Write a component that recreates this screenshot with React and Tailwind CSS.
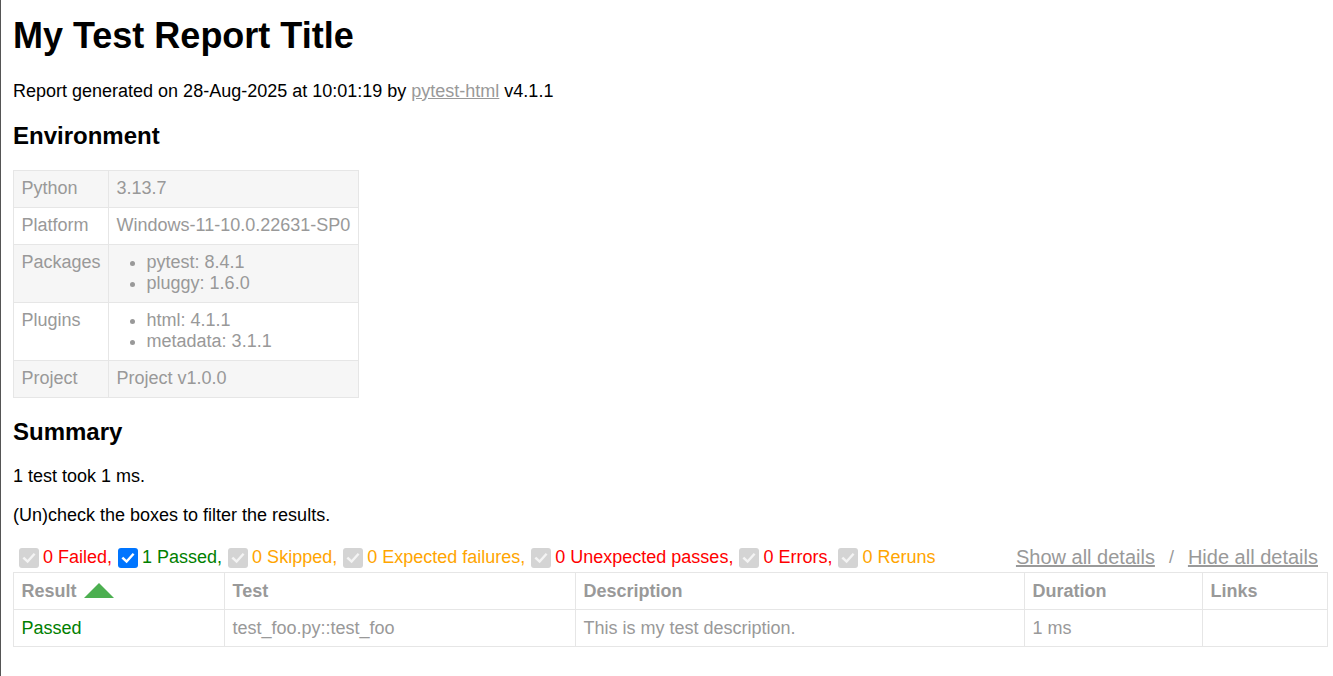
import React from "react";

const env = [
  { key: "Python", value: "3.13.7" },
  { key: "Platform", value: "Windows-11-10.0.22631-SP0" },
  { key: "Packages", list: ["pytest: 8.4.1", "pluggy: 1.6.0"] },
  { key: "Plugins", list: ["html: 4.1.1", "metadata: 3.1.1"] },
  { key: "Project", value: "Project v1.0.0" },
];

const filters = [
  { label: "0 Failed,", color: "text-[#ff0000]", checked: false },
  { label: "1 Passed,", color: "text-[#008000]", checked: true },
  { label: "0 Skipped,", color: "text-[#ffa500]", checked: false },
  { label: "0 Expected failures,", color: "text-[#ffa500]", checked: false },
  { label: "0 Unexpected passes,", color: "text-[#ff0000]", checked: false },
  { label: "0 Errors,", color: "text-[#ff0000]", checked: false },
  { label: "0 Reruns", color: "text-[#ffa500]", checked: false },
];

function CheckBox({ active }) {
  return (
    <span
      className={`ml-[6px] mr-[4.5px] my-[4.5px] flex h-[19.5px] w-[19.5px] shrink-0 items-center justify-center rounded-[3px] ${
        active ? "bg-[#0075ff]" : "bg-[#d4d4d4]"
      }`}
    >
      <svg width="14" height="14" viewBox="0 0 14 14" fill="none">
        <path
          d="M2.2 7.4 L5.6 10.6 L11.8 3.6"
          stroke={active ? "#ffffff" : "#f4f4f4"}
          strokeWidth="2.4"
          strokeLinecap="square"
        />
      </svg>
    </span>
  );
}

export default function App() {
  return (
    <div className="min-h-screen border-l border-[#555] bg-white pl-[12px] pr-[6px] pt-[15px] font-['Liberation_Sans',Arial,Helvetica,sans-serif] text-[18px] leading-[normal] text-[#999]">
      <h1 className="mb-[24px] text-[36px] font-bold leading-[normal] text-black">
        My Test Report Title
      </h1>
      <p className="mb-[18px] text-black">
        Report generated on 28-Aug-2025 at 10:01:19 by{" "}
        <a href="#" className="text-[#999] underline">
          pytest-html
        </a>{" "}
        v4.1.1
      </p>

      <h2 className="my-[19.92px] text-[24px] font-bold leading-[normal] text-black">
        Environment
      </h2>
      <table className="border-collapse">
        <tbody>
          {env.map((row, i) => (
            <tr key={row.key} className={i % 2 === 0 ? "bg-[#f6f6f6]" : ""}>
              <td className="border border-[#e6e6e6] p-[7.5px] align-top">{row.key}</td>
              <td className="border border-[#e6e6e6] p-[7.5px] align-top">
                {row.list ? (
                  <ul className="m-0 list-disc px-[30px]">
                    {row.list.map((item) => (
                      <li key={item}>{item}</li>
                    ))}
                  </ul>
                ) : (
                  row.value
                )}
              </td>
            </tr>
          ))}
        </tbody>
      </table>

      <h2 className="my-[19.92px] text-[24px] font-bold leading-[normal] text-black">
        Summary
      </h2>
      <p className="mb-[18px] text-black">1 test took 1 ms.</p>
      <p className="mb-[18px] text-black">(Un)check the boxes to filter the results.</p>

      <div className="flex justify-between">
        <div className="flex items-center">
          {filters.map((f) => (
            <React.Fragment key={f.label}>
              <CheckBox active={f.checked} />
              <span className={`whitespace-nowrap ${f.color}`}>{f.label}</span>
            </React.Fragment>
          ))}
        </div>
        <div className="flex items-center">
          <button className="px-[9px] py-[1.5px] text-[20px] leading-[normal] text-[#999] underline">
            Show all details
          </button>
          <span>{"\u00a0/\u00a0"}</span>
          <button className="px-[9px] py-[1.5px] text-[20px] leading-[normal] text-[#999] underline">
            Hide all details
          </button>
        </div>
      </div>

      <table className="w-full table-fixed border-collapse border border-[#e6e6e6]">
        <colgroup>
          <col className="w-[211px]" />
          <col className="w-[351px]" />
          <col className="w-[449px]" />
          <col className="w-[178px]" />
          <col className="w-[125px]" />
        </colgroup>
        <thead>
          <tr>
            <th className="border border-[#e6e6e6] p-[7.5px] text-left font-bold">
              <div className="flex items-center">
                <span>Result</span>
                <span className="relative -top-px ml-[7px] inline-block h-0 w-0 border-x-[15px] border-b-[15px] border-x-transparent border-b-[#4caf50]" />
              </div>
            </th>
            <th className="border border-[#e6e6e6] p-[7.5px] text-left font-bold">Test</th>
            <th className="border border-[#e6e6e6] p-[7.5px] text-left font-bold">Description</th>
            <th className="border border-[#e6e6e6] p-[7.5px] text-left font-bold">Duration</th>
            <th className="border border-[#e6e6e6] p-[7.5px] text-left font-bold">Links</th>
          </tr>
        </thead>
        <tbody>
          <tr>
            <td className="border border-[#e6e6e6] p-[7.5px] text-[#008000]">Passed</td>
            <td className="border border-[#e6e6e6] p-[7.5px]">test_foo.py::test_foo</td>
            <td className="border border-[#e6e6e6] p-[7.5px]">This is my test description.</td>
            <td className="border border-[#e6e6e6] p-[7.5px]">1 ms</td>
            <td className="border border-[#e6e6e6] p-[7.5px]"></td>
          </tr>
        </tbody>
      </table>
    </div>
  );
}
